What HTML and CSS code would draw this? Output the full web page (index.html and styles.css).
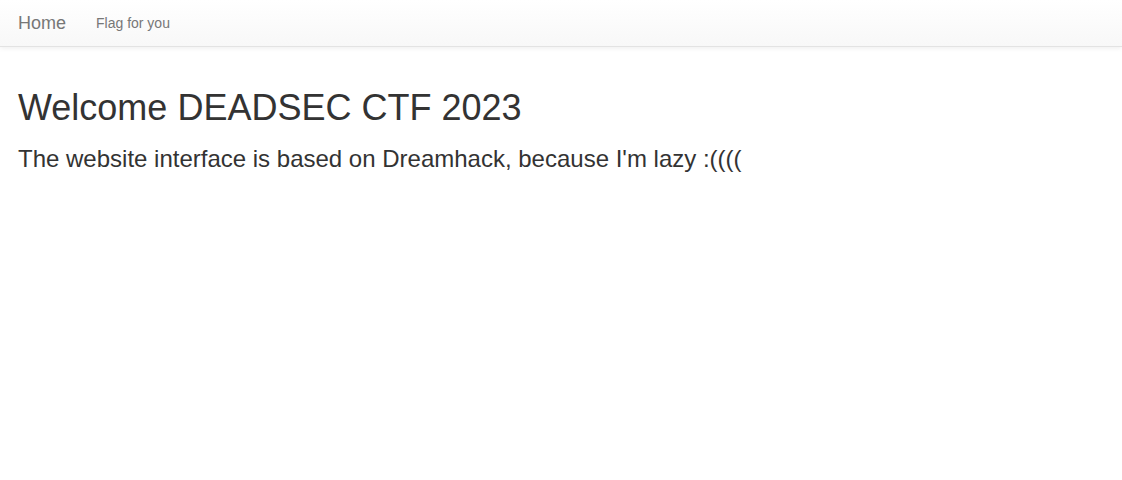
FILE: index.html
```html
<!DOCTYPE html>
<html>
<head>
<meta charset="utf-8">
<title>DEADSEC CTF 2023</title>
<link rel="stylesheet" href="styles.css">
</head>
<body>
<nav class="navbar">
  <a class="brand" href="#">Home</a>
  <a class="nav-link" href="#">Flag for you</a>
</nav>
<main class="content">
  <h1 class="title">Welcome DEADSEC CTF 2023</h1>
  <p class="lead">The website interface is based on Dreamhack, because I'm lazy :((((</p>
</main>
</body>
</html>
```
FILE: styles.css
```css
html, body {
  margin: 0;
  padding: 0;
  background: #fff;
  font-family: "Liberation Sans", Arial, Helvetica, sans-serif;
  color: #333;
}
.navbar {
  display: flex;
  align-items: center;
  height: 46px;
  padding-left: 18px;
  background: linear-gradient(to bottom, #ffffff 0%, #f8f8f8 100%);
  border-bottom: 1px solid #e3e3e3;
  box-shadow: 0 1px 5px rgba(0, 0, 0, 0.075);
}
.brand {
  font-size: 18px;
  line-height: 20px;
  color: #777;
  text-decoration: none;
}
.nav-link {
  margin-left: 30px;
  font-size: 14px;
  line-height: 20px;
  color: #777;
  text-decoration: none;
}
.content {
  padding: 0 18px;
}
.title {
  margin: 41px 0 0;
  font-size: 36px;
  font-weight: 500;
  line-height: 40px;
}
.lead {
  margin: 17px 0 0;
  font-size: 24px;
  line-height: 28px;
}
```
